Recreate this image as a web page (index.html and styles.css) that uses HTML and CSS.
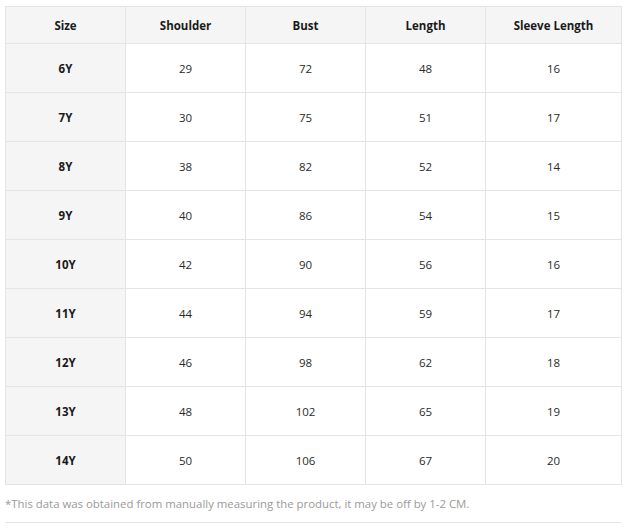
FILE: index.html
```html
<!DOCTYPE html>
<html>
<head>
<meta charset="utf-8">
<link rel="stylesheet" href="styles.css">
</head>
<body>
<div class="wrap">
<table class="size-table">
<colgroup><col class="c"><col class="c"><col class="c"><col class="c"><col class="c-last"></colgroup>
<thead>
<tr><th>Size</th><th>Shoulder</th><th>Bust</th><th>Length</th><th>Sleeve Length</th></tr>
</thead>
<tbody>
<tr><th>6Y</th><td>29</td><td>72</td><td>48</td><td>16</td></tr>
<tr><th>7Y</th><td>30</td><td>75</td><td>51</td><td>17</td></tr>
<tr><th>8Y</th><td>38</td><td>82</td><td>52</td><td>14</td></tr>
<tr><th>9Y</th><td>40</td><td>86</td><td>54</td><td>15</td></tr>
<tr><th>10Y</th><td>42</td><td>90</td><td>56</td><td>16</td></tr>
<tr><th>11Y</th><td>44</td><td>94</td><td>59</td><td>17</td></tr>
<tr><th>12Y</th><td>46</td><td>98</td><td>62</td><td>18</td></tr>
<tr><th>13Y</th><td>48</td><td>102</td><td>65</td><td>19</td></tr>
<tr><th>14Y</th><td>50</td><td>106</td><td>67</td><td>20</td></tr>
</tbody>
</table>
<p class="note">*This data was obtained from manually measuring the product, it may be off by 1-2 CM.</p>
<div class="rule"></div>
</div>
</body>
</html>
```
FILE: styles.css
```css
html, body { margin: 0; padding: 0; background: #fff; }
body { font-family: "Open Sans", "Noto Sans", sans-serif; color: #222; }
.wrap { padding: 6px 0 0 5px; width: 616px; }
.size-table { border-collapse: collapse; width: 616px; table-layout: fixed; }
.size-table .c { width: 120px; }
.size-table .c-last { width: 136px; }
.size-table th, .size-table td {
  border: 1px solid #e4e4e4;
  text-align: center;
  font-size: 11.5px;
  padding: 0;
}
.size-table thead th {
  height: 36px;
  background: #f5f5f5;
  font-weight: 700;
  color: #1a1a1a;
}
.size-table tbody th {
  background: #f5f5f5;
  font-weight: 700;
  color: #1a1a1a;
  height: 48px;
}
.size-table td { height: 48px; color: #2a2a2a; }
.note {
  margin: 11px 0 0 0;
  font-size: 11.4px;
  color: #9a9a9a;
  line-height: 16px;
}
.rule { margin-top: 10px; height: 1px; background: #e4e4e4; }
```
